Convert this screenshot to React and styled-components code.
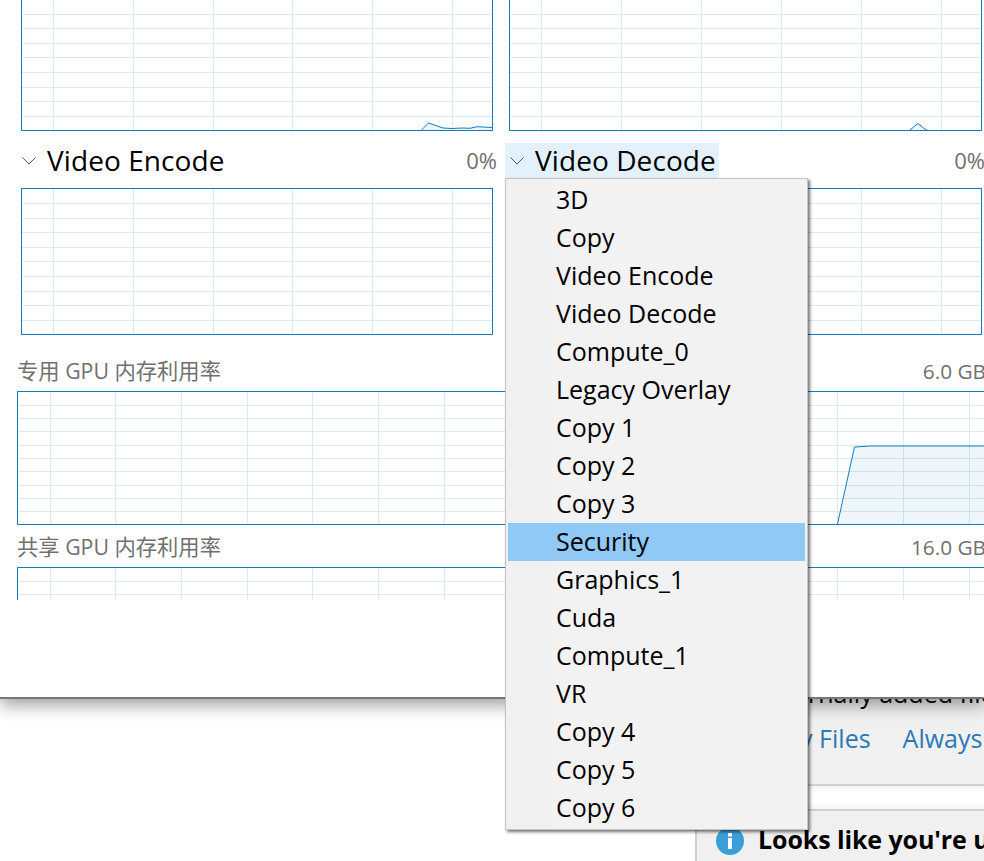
import React from "react";
import styled, { createGlobalStyle } from "styled-components";

const Global = createGlobalStyle`
  html, body { margin: 0; padding: 0; background: #fff; }
  body { font-family: "Open Sans", "Noto Sans CJK SC", sans-serif; }
`;

const Page = styled.div`
  position: relative;
  width: 984px;
  height: 861px;
  overflow: hidden;
  background: #fff;
`;

const Window = styled.section`
  position: relative;
  z-index: 2;
  box-sizing: border-box;
  height: 715px;
  margin-top: -16px;
  background: #fff;
  border-bottom: 2px solid #777;
  box-shadow: 0 6px 16px rgba(0, 0, 0, 0.38);
`;

const EngineGrid = styled.div`
  display: grid;
  grid-template-columns: 472px 472px;
  column-gap: 16px;
  margin-left: 21px;
`;

const EngineCell = styled.div`
  display: flex;
  flex-direction: column;
`;

const EngineHeader = styled.div`
  display: flex;
  align-items: center;
  justify-content: space-between;
  height: 35px;
  margin: 12px -4px 10px;
`;

const EngineAnchor = styled.div`
  position: relative;
  height: 35px;
`;

const EngineButton = styled.div`
  display: flex;
  align-items: center;
  gap: 11px;
  height: 35px;
  line-height: 33px;
  padding: 0 3px 0 5px;
  background: ${(p) => (p.$open ? "#e3f1fc" : "transparent")};
  font-size: 28px;
  letter-spacing: 0.08px;
  color: #000;
  white-space: nowrap;
`;

const Percent = styled.span`
  font-size: 22px;
  color: #707070;
  margin-top: -2px;
`;

const ChartFrame = styled.div`
  box-sizing: border-box;
  width: ${(p) => p.$w}px;
  height: ${(p) => p.$h}px;
  flex: none;
  border: 1px solid #117dbb;
  border-width: ${(p) => (p.$open ? "1px 1px 0 1px" : "1px")};
  background: #fff;
  overflow: hidden;
`;

const ChartSvg = styled.svg`
  display: block;
`;

const MemorySection = styled.div`
  margin-left: 17px;
  width: 969px;
`;

const MemoryLabel = styled.div`
  display: flex;
  justify-content: space-between;
  height: 28px;
  line-height: 28px;
  margin: ${(p) => p.$top}px 0 6px;
  font-size: 21.3px;
  color: #707070;
  white-space: nowrap;
`;

const MemoryValue = styled.span`
  font-size: 20.8px;
`;

const Menu = styled.ul`
  position: absolute;
  z-index: 5;
  top: 100%;
  left: 0;
  box-sizing: border-box;
  width: 303px;
  margin: 0;
  padding: 2px;
  list-style: none;
  border: 1px solid #c4c4c4;
  background: linear-gradient(to right, #f0f0f0 46px, #f2f2f2 46px);
  box-shadow: 2px 2px 3px rgba(0, 0, 0, 0.55);
`;

const MenuItem = styled.li`
  height: 38px;
  line-height: 36px;
  padding-left: 48px;
  font-size: 25px;
  color: #000;
  background: ${(p) => (p.$active ? "#90c8f6" : "transparent")};
  white-space: nowrap;
`;

const Lower = styled.div`
  position: relative;
  z-index: 1;
  display: flex;
  flex-direction: column;
  margin: -38px 0 0 695px;
  width: 400px;
`;

const Card = styled.div`
  box-sizing: border-box;
  flex: none;
  height: ${(p) => p.$h}px;
  padding: ${(p) => p.$pad};
  background: #f0f0f0;
  border-left: 2px solid #d0d0d0;
  font-size: 25px;
  color: #000;
  white-space: nowrap;
`;

const CardLine = styled.div`
  height: 44px;
  line-height: 41px;
`;

const CardActions = styled.div`
  display: flex;
  gap: 32px;
  height: 44px;
  line-height: 42px;
  margin-left: -4px;
  color: #2b78b9;
`;

const Divider = styled.div`
  flex: none;
  box-sizing: border-box;
  height: 27px;
  border-top: 2px solid #d0d0d0;
  border-bottom: 2px solid #d0d0d0;
  background: linear-gradient(#f4f4f4, #fff 30%, #fff 70%, #f4f4f4);
`;

const Notice = styled.div`
  display: flex;
  align-items: center;
  gap: 14px;
  font-weight: 700;
  height: 48px;
  line-height: 44px;
  letter-spacing: -0.1px;
`;

const NoticeText = styled.span`
  margin-top: -4px;
`;

const gridColor = "#dbe9f3";
const lineColor = "#117dbb";

function Chart({ w, h, xs, ys, open, area, base }) {
  const pts = area ? area.split(" ") : [];
  const fill = area
    ? `${area} ${pts[pts.length - 1].split(",")[0]},${base} ${pts[0].split(",")[0]},${base}`
    : "";
  return (
    <ChartFrame $w={w} $h={h} $open={open}>
      <ChartSvg width={w - 2} height={h} shapeRendering="crispEdges">
        {xs.map((x) => (
          <rect key={"x" + x} x={x} y={0} width={1} height={h} fill={gridColor} />
        ))}
        {ys.map((y) => (
          <rect key={"y" + y} x={0} y={y} width={w} height={1} fill={gridColor} />
        ))}
        {area && (
          <g shapeRendering="auto">
            <polygon points={fill} fill="rgba(17,125,187,0.07)" />
            <polyline points={area} fill="none" stroke={lineColor} strokeWidth="1" />
          </g>
        )}
      </ChartSvg>
    </ChartFrame>
  );
}

const Chevron = () => (
  <svg width="14" height="8" viewBox="0 0 14 8" fill="none" stroke="#555" strokeWidth="1">
    <polyline points="0.5,0.5 7,7 13.5,0.5" />
  </svg>
);

const engXs = [31, 111, 191, 270, 350, 430];
const engXsR = [31, 111, 191, 271, 351, 431];
const engYs = [14, 29, 43, 58, 72, 87, 102, 116, 131];
const memXs = [32, 97, 163, 229, 294, 360, 426, 492, 557, 623, 689, 754, 819, 885, 951];
const memYs = [13, 26, 39, 53, 66, 79, 93, 106, 119];

const items = [
  "3D", "Copy", "Video Encode", "Video Decode", "Compute_0", "Legacy Overlay",
  "Copy 1", "Copy 2", "Copy 3", "Security", "Graphics_1", "Cuda", "Compute_1",
  "VR", "Copy 4", "Copy 5", "Copy 6",
];

export default function App() {
  return (
    <Page>
      <Global />
      <Window>
        <EngineGrid>
          <Chart
            w={472}
            h={147}
            xs={engXs}
            ys={engYs}
            base={145}
            area="399.5,145 406.5,138 421,143 430,143.5 440,143 448,143.3 455,141.7 470,142.5"
          />
          <Chart
            w={473}
            h={147}
            xs={engXsR}
            ys={engYs}
            base={145}
            area="400,145 408,138.5 416,145 423,146"
          />
          <EngineCell>
            <EngineHeader>
              <EngineButton>
                <Chevron />
                Video Encode
              </EngineButton>
              <Percent>0%</Percent>
            </EngineHeader>
            <Chart w={472} h={147} xs={engXs} ys={engYs} />
          </EngineCell>
          <EngineCell>
            <EngineHeader>
              <EngineAnchor>
                <EngineButton $open>
                  <Chevron />
                  Video Decode
                </EngineButton>
                <Menu>
                  {items.map((t) => (
                    <MenuItem key={t} $active={t === "Security"}>
                      {t}
                    </MenuItem>
                  ))}
                </Menu>
              </EngineAnchor>
              <Percent>0%</Percent>
            </EngineHeader>
            <Chart w={473} h={147} xs={engXsR} ys={engYs} />
          </EngineCell>
        </EngineGrid>
        <MemorySection>
          <MemoryLabel $top={22}>
            <span>专用 GPU 内存利用率</span>
            <MemoryValue>6.0 GB</MemoryValue>
          </MemoryLabel>
          <Chart
            w={1000}
            h={134}
            xs={memXs}
            ys={memYs}
            base={132}
            area="819.5,132 836.5,55 852,54 990,54"
          />
          <MemoryLabel $top={8}>
            <span>共享 GPU 内存利用率</span>
            <MemoryValue>16.0 GB</MemoryValue>
          </MemoryLabel>
          <Chart w={1000} h={33} xs={memXs} ys={memYs} open />
        </MemorySection>
      </Window>
      <Lower>
        <Card $h={123} $pad="12px 0 0 61px">
          <CardLine>externally added files</CardLine>
          <CardActions>
            <span>Copy Files</span>
            <span>Always</span>
          </CardActions>
        </Card>
        <Divider />
        <Card $h={60} $pad="6px 0 0 19px">
          <Notice>
            <svg width="28" height="28" viewBox="0 0 28 28">
              <circle cx="14" cy="14" r="14" fill="#3a9fd8" />
              <rect x="12" y="11" width="4" height="11" fill="#fff" />
              <rect x="12" y="6" width="4" height="3.5" fill="#fff" />
            </svg>
            <NoticeText>Looks like you're using</NoticeText>
          </Notice>
        </Card>
      </Lower>
    </Page>
  );
}
